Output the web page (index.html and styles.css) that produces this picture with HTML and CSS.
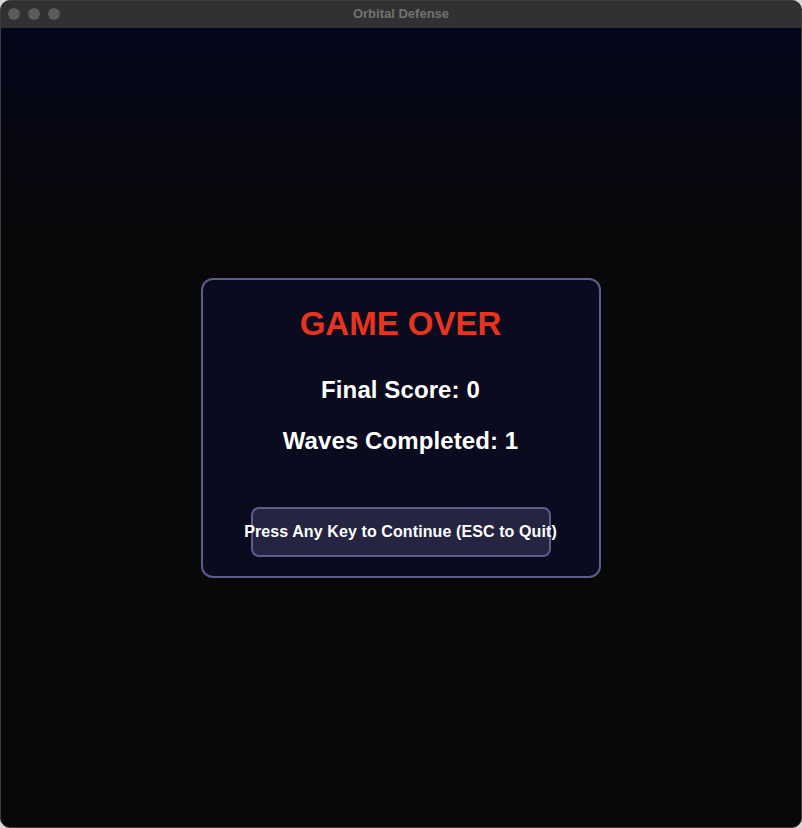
FILE: index.html
```html
<!DOCTYPE html>
<html>
<head>
<meta charset="utf-8">
<title>Orbital Defense</title>
<link rel="stylesheet" href="styles.css">
</head>
<body>
<div class="window">
  <div class="titlebar">
    <div class="lights"><span class="light"></span><span class="light"></span><span class="light"></span></div>
    <div class="title">Orbital Defense</div>
  </div>
  <div class="content">
    <div class="panel">
      <h1 class="heading">GAME OVER</h1>
      <p class="stat stat-score">Final Score: 0</p>
      <p class="stat stat-waves">Waves Completed: 1</p>
      <div class="button">Press Any Key to Continue (ESC to Quit)</div>
    </div>
  </div>
</div>
</body>
</html>
```
FILE: styles.css
```css
html, body {
  margin: 0;
  padding: 0;
  background: #d8d8d8;
}
body {
  width: 802px;
  height: 828px;
  overflow: hidden;
  font-family: "Liberation Sans", Arial, sans-serif;
}
.window {
  width: 802px;
  height: 828px;
  box-sizing: border-box;
  border: 1px solid #3c3c3c;
  border-radius: 10px;
  overflow: hidden;
  display: flex;
  flex-direction: column;
  background: #080808;
}
.titlebar {
  height: 27px;
  flex: none;
  background: #313131;
  position: relative;
  display: flex;
  align-items: center;
  justify-content: center;
}
.lights {
  position: absolute;
  left: 7px;
  top: 7px;
  display: flex;
  gap: 8px;
}
.light {
  width: 12px;
  height: 12px;
  border-radius: 50%;
  background: #5a5a5a;
}
.title {
  color: #727272;
  font-size: 13px;
  font-weight: bold;
  margin-top: -2px;
}
.content {
  flex: 1;
  display: flex;
  align-items: center;
  justify-content: center;
  background: linear-gradient(to bottom, #04061c 0px, #060712 100px, #080808 230px, #080808 100%);
}
.panel {
  width: 400px;
  height: 300px;
  box-sizing: border-box;
  border: 2px solid #5c5c8e;
  border-radius: 12px;
  background: #0a0b1e;
  display: flex;
  flex-direction: column;
  align-items: center;
  padding-top: 24px;
  margin-left: -1px;
}
.heading {
  margin: 0;
  font-size: 33px;
  line-height: 40px;
  font-weight: bold;
  color: #e8331f;
}
.stat {
  margin: 0;
  color: #ffffff;
  font-size: 24px;
  line-height: 30px;
  font-weight: bold;
  letter-spacing: 0.1px;
}
.stat-score {
  margin-top: 31px;
}
.stat-waves {
  margin-top: 21px;
}
.button {
  margin-top: 51px;
  width: 300px;
  height: 50px;
  box-sizing: border-box;
  border: 2px solid #5c5c8e;
  border-radius: 8px;
  background: #252541;
  color: #ffffff;
  font-size: 16px;
  font-weight: bold;
  letter-spacing: 0.1px;
  display: flex;
  align-items: center;
  justify-content: center;
  white-space: nowrap;
}
```
